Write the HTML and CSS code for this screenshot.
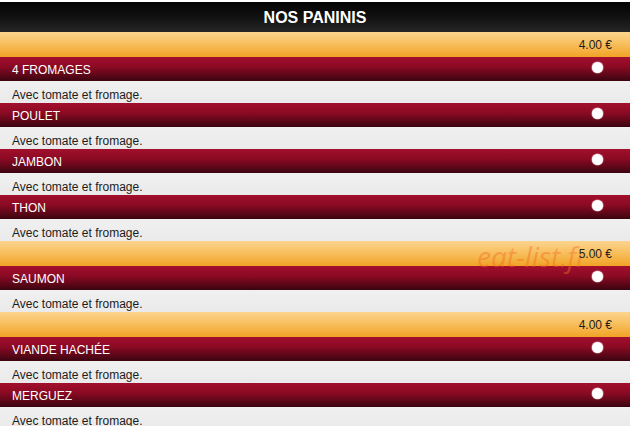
FILE: index.html
```html
<!DOCTYPE html>
<html lang="fr">
<head>
<meta charset="utf-8">
<title>Nos paninis</title>
<link rel="stylesheet" href="styles.css">
</head>
<body>
<div class="menu">
  <h1 class="menu-title">NOS PANINIS</h1>

  <div class="price-band"><span class="price">4.00 €</span></div>
  <div class="item">
    <div class="item-head"><span class="item-name">4 FROMAGES</span><span class="radio"></span></div>
    <p class="item-desc">Avec tomate et fromage.</p>
  </div>
  <div class="item">
    <div class="item-head"><span class="item-name">POULET</span><span class="radio"></span></div>
    <p class="item-desc">Avec tomate et fromage.</p>
  </div>
  <div class="item">
    <div class="item-head"><span class="item-name">JAMBON</span><span class="radio"></span></div>
    <p class="item-desc">Avec tomate et fromage.</p>
  </div>
  <div class="item">
    <div class="item-head"><span class="item-name">THON</span><span class="radio"></span></div>
    <p class="item-desc">Avec tomate et fromage.</p>
  </div>

  <div class="price-band"><span class="price">5.00 €</span></div>
  <div class="item">
    <div class="item-head"><span class="item-name">SAUMON</span><span class="radio"></span></div>
    <p class="item-desc">Avec tomate et fromage.</p>
  </div>

  <div class="price-band"><span class="price">4.00 €</span></div>
  <div class="item">
    <div class="item-head"><span class="item-name">VIANDE HACHÉE</span><span class="radio"></span></div>
    <p class="item-desc">Avec tomate et fromage.</p>
  </div>
  <div class="item">
    <div class="item-head"><span class="item-name">MERGUEZ</span><span class="radio"></span></div>
    <p class="item-desc">Avec tomate et fromage.</p>
  </div>

  <span class="watermark">eat-list.fr</span>
</div>
</body>
</html>
```

FILE: styles.css
```css
html, body {
  margin: 0;
  padding: 0;
  background: #ebebeb;
}

body {
  font-family: "Liberation Sans", Arial, sans-serif;
  overflow: hidden;
}

.menu {
  position: relative;
  display: flex;
  flex-direction: column;
  padding-top: 2px;
  background: #fff;
}

.menu-title {
  margin: 0;
  height: 30px;
  line-height: 32px;
  text-align: center;
  font-size: 16px;
  font-weight: bold;
  color: #fff;
  background: linear-gradient(#030303, #111 50%, #262626);
}

.price-band {
  display: flex;
  justify-content: flex-end;
  height: 25px;
  line-height: 27px;
  padding-right: 18px;
  background: linear-gradient(#fcd48f, #f8c060 45%, #f1a325);
}

.price {
  position: relative;
  z-index: 2;
  font-size: 12px;
  color: #1e1e1e;
}

.item {
  display: flex;
  flex-direction: column;
}

.item-head {
  display: flex;
  justify-content: space-between;
  height: 24px;
  line-height: 26px;
  padding-left: 12px;
  padding-right: 27px;
  background: linear-gradient(#a30f2d, #8c0a24 40%, #5e0718 75%, #3a0410);
}

.item-name {
  font-size: 12px;
  color: #fff;
}

.radio {
  width: 11px;
  height: 11px;
  margin-top: 5px;
  border-radius: 50%;
  background: #fff;
  box-shadow: 0 0 1px 0.5px rgba(255, 230, 235, 0.7);
}

.item-desc {
  margin: 0;
  box-sizing: border-box;
  height: 22px;
  padding: 7px 0 0 12px;
  line-height: 14px;
  font-size: 12px;
  color: #1c1c1c;
  background: linear-gradient(#f0f0f0, #eaeaea);
}

/* site mark, laid faintly over the second price band */
.watermark {
  position: absolute;
  left: 477px;
  top: 236px;
  width: 104px;
  overflow: hidden;
  white-space: nowrap;
  font-family: "Open Sans", sans-serif;
  font-style: italic;
  font-size: 28px;
  line-height: 40px;
  color: rgba(242, 110, 40, 0.45);
  z-index: 1;
}
```
